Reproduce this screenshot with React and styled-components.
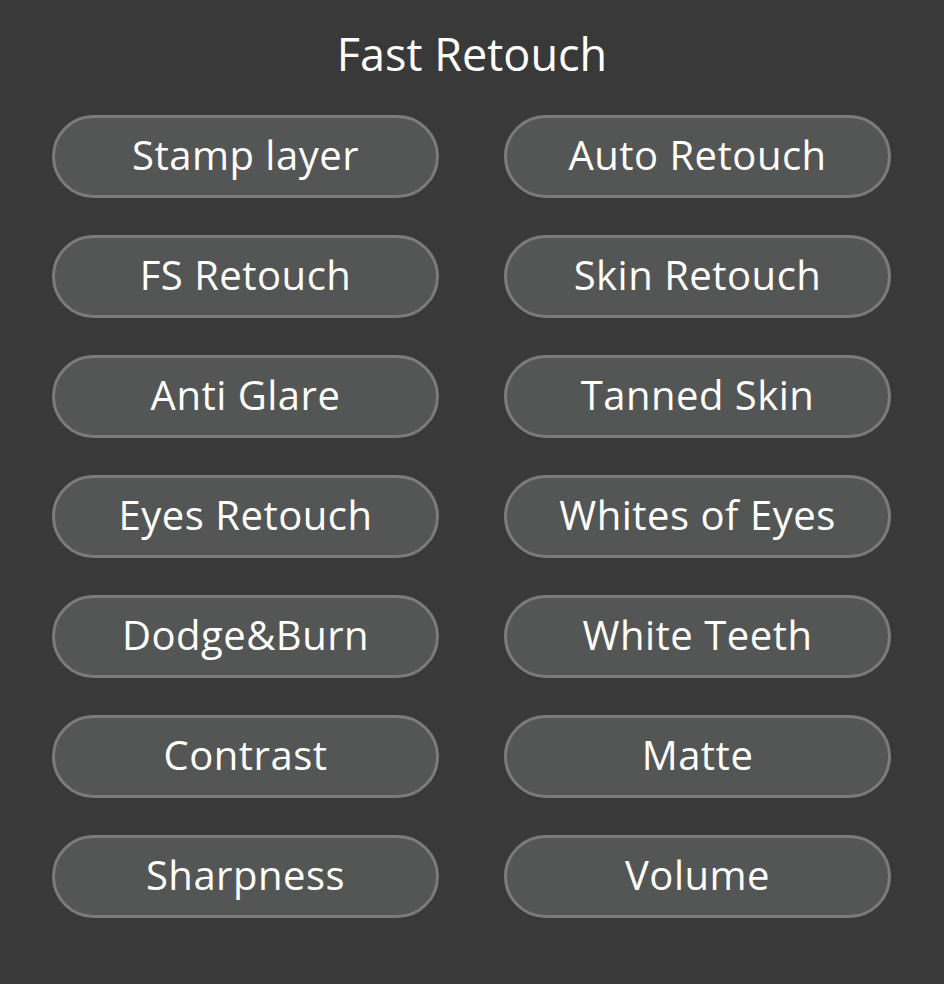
import React from 'react';
import styled, { createGlobalStyle } from 'styled-components';

const GlobalStyle = createGlobalStyle`
  html, body {
    margin: 0;
    padding: 0;
    background-color: #393939;
  }
`;

const items = [
  'Stamp layer',
  'Auto Retouch',
  'FS Retouch',
  'Skin Retouch',
  'Anti Glare',
  'Tanned Skin',
  'Eyes Retouch',
  'Whites of Eyes',
  'Dodge&Burn',
  'White Teeth',
  'Contrast',
  'Matte',
  'Sharpness',
  'Volume',
];

const App = () => {
  return (
    <Panel>
      <GlobalStyle />
      <Title>Fast Retouch</Title>
      <Grid>
        {items.map((label) => (
          <ActionButton key={label}>{label}</ActionButton>
        ))}
      </Grid>
    </Panel>
  );
};

const Panel = styled.div`
  width: 944px;
  height: 984px;
  box-sizing: border-box;
  padding: 26px 52px 0 52px;
  background-color: #393939;
  font-family: 'Open Sans', 'Noto Sans', sans-serif;
  color: #ffffff;
`;

const Title = styled.h1`
  margin: 0;
  height: 62px;
  font-size: 45px;
  font-weight: 400;
  line-height: 56px;
  text-align: center;
`;

const Grid = styled.div`
  display: grid;
  grid-template-columns: 387px 387px;
  column-gap: 65px;
  row-gap: 37px;
  margin-top: 27px;
`;

const ActionButton = styled.button`
  height: 83px;
  box-sizing: border-box;
  border: 3px solid #7b7b7b;
  border-radius: 42px;
  background-color: #545655;
  color: #ffffff;
  font-family: 'Open Sans', 'Noto Sans', sans-serif;
  font-size: 40px;
  font-weight: 400;
  letter-spacing: 0.5px;
  padding: 0 0 4px 0;
  cursor: pointer;
`;

export default App;
